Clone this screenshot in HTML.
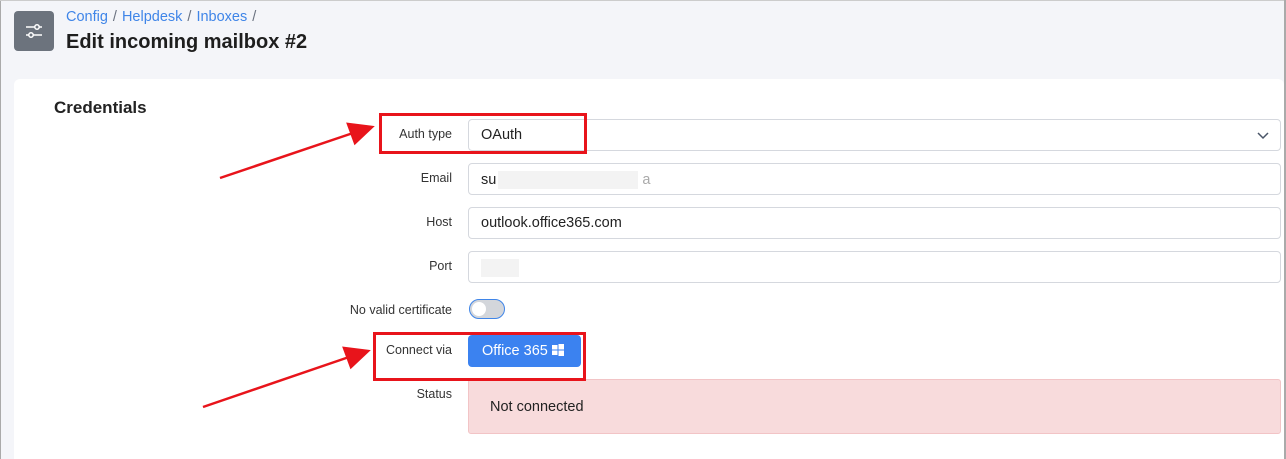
<!DOCTYPE html>
<html><head><style>
*{box-sizing:border-box;margin:0;padding:0}
html,body{width:1286px;height:459px;overflow:hidden}
body{background:#f4f5f9;font-family:"Liberation Sans",sans-serif;position:relative}
.abs{position:absolute}
.icon{left:14px;top:11px;width:40px;height:40px;background:#6c737d;border-radius:4px}
.bc{left:66px;top:9px;font-size:14.5px;color:#3f85e8}
.bc span{color:#6b7280;margin:0 5px}
h1{position:absolute;left:66px;top:31px;font-size:20px;font-weight:bold;color:#1e1e1e}
.card{left:14px;top:79px;width:1270px;height:380px;background:#fff;border-radius:6px 6px 0 0}
.h2{left:54px;top:98px;font-size:17px;font-weight:bold;color:#222}
.lbl{font-size:12.5px;color:#333;text-align:right;right:834px}
.inp{left:468px;width:813px;height:32px;border:1px solid #d5d8de;border-radius:4px;background:#fff;font-size:14.5px;color:#222;padding:7px 12px}
.red{border:3px solid #e8141b}
</style></head><body>
<div class="abs" style="left:0;top:0;width:1px;height:459px;background:#aaa"></div>
<div class="abs" style="left:0;top:0;width:1286px;height:1px;background:#ccc"></div>
<div class="abs" style="left:1284px;top:0;width:2px;height:459px;background:#aaa"></div>
<div class="abs icon"><svg width="40" height="40"><g stroke="#fff" stroke-width="1.5" fill="none"><line x1="12" y1="16" x2="28" y2="16"/><line x1="12" y1="24" x2="28" y2="24"/><circle cx="23" cy="16" r="2.2" fill="#6c737d"/><circle cx="17" cy="24" r="2.2" fill="#6c737d"/></g></svg></div>
<div class="abs bc">Config<span>/</span>Helpdesk<span>/</span>Inboxes<span>/</span></div>
<h1>Edit incoming mailbox #2</h1>
<div class="abs card"></div>
<div class="abs h2">Credentials</div>

<div class="abs lbl" style="top:127px">Auth type</div>
<div class="abs inp" style="top:119px">OAuth<svg class="abs" style="right:10px;top:10px" width="14" height="10"><path d="M2 3l5 5 5-5" stroke="#4a5568" stroke-width="1.5" fill="none"/></svg></div>
<div class="abs lbl" style="top:171px">Email</div>
<div class="abs inp" style="top:163px">su<span style="display:inline-block;width:140px;height:18px;background:#f3f3f3;vertical-align:middle;margin-left:2px"></span><span style="color:#aaa;margin-left:4px">a</span></div>
<div class="abs lbl" style="top:215px">Host</div>
<div class="abs inp" style="top:207px">outlook.office365.com</div>
<div class="abs lbl" style="top:259px">Port</div>
<div class="abs inp" style="top:251px"><span style="display:inline-block;width:38px;height:18px;background:#f3f3f3"></span></div>
<div class="abs lbl" style="top:303px">No valid certificate</div>
<div class="abs" style="left:469px;top:299px;width:36px;height:20px;border-radius:10px;background:#d3d6db;border:1px solid #3f85e8"><div style="position:absolute;left:2px;top:2px;width:14px;height:14px;border-radius:50%;background:#fff"></div></div>
<div class="abs lbl" style="top:343px">Connect via</div>
<div class="abs" style="left:468px;top:335px;width:113px;height:32px;background:#3b82f0;border-radius:4px;color:#fff;font-size:14.5px;padding:8px 0 0 14px">Office 365 <svg width="12" height="12" style="vertical-align:-1px"><g fill="#fff"><rect x="0" y="1" width="5.5" height="4.5"/><rect x="6.5" y="0" width="5.5" height="5.5"/><rect x="0" y="6.5" width="5.5" height="4.5"/><rect x="6.5" y="6.5" width="5.5" height="5.5"/></g></svg></div>
<div class="abs lbl" style="top:387px">Status</div>
<div class="abs" style="left:468px;top:379px;width:813px;height:55px;background:#f8dbdc;border:1px solid #f2c4c6;border-radius:3px;font-size:14.5px;color:#222;padding:19px 21px">Not connected</div>

<div class="abs red" style="left:379px;top:113px;width:208px;height:41px"></div>
<div class="abs red" style="left:373px;top:332px;width:213px;height:49px"></div>
<svg class="abs" style="left:0;top:0" width="1286" height="459"><g stroke="#e8141b" stroke-width="2.5" fill="#e8141b"><line x1="220" y1="178" x2="356" y2="132"/><polygon points="372,127 348,124 355,143"/><line x1="203" y1="407" x2="352" y2="356"/><polygon points="368,351 344,348 351,367"/></g></svg>
</body></html>
